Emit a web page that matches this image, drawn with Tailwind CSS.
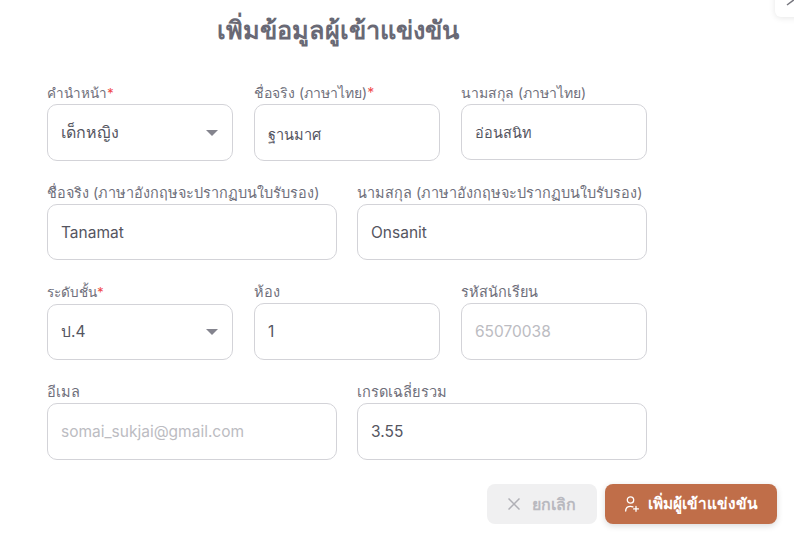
<!DOCTYPE html>
<html lang="th">
<head>
    <meta charset="UTF-8">
    <meta name="viewport" content="width=device-width, initial-scale=1.0">
    <title>เพิ่มข้อมูลผู้เข้าแข่งขัน</title>
    <script src="https://cdn.jsdelivr.net/npm/@tailwindcss/browser@4"></script>
</head>
<body class="bg-white font-['Inter','Noto_Sans','Noto_Sans_CJK_SC',sans-serif] h-[537px] overflow-hidden relative">

    <!-- Corner toggle, cut off by the window edge -->
    <div class="absolute left-[775px] top-[-20px] w-[40px] h-[37px] bg-white rounded-md shadow-[0_1px_6px_rgba(0,0,0,0.10)]">
        <svg class="absolute left-[10px] top-[12px] w-[14px] h-[14px] text-[#77777f]" viewBox="0 0 14 14" fill="none" stroke="currentColor" stroke-width="1.5"><path d="M2 1 10 7 2 13"/></svg>
    </div>

    <h1 class="pl-[217px] pt-[13px] h-[77px] text-[25.3px] leading-[34px] font-semibold text-[#696975]">เพิ่มข้อมูลผู้เข้าแข่งขัน</h1>

    <form class="w-[600px] ml-[47px] flex flex-col">
        <!-- Name (Thai) -->
        <div class="grid grid-cols-[186px_186px_186px] gap-x-[21px] h-[100px]">
            <div>
                <label class="block h-[27px] text-[13.5px] leading-[32px] text-[#6f6f7b]">คำนำหน้า<span class="text-[#f04b4b]">*</span></label>
                <div class="h-[57px] border border-[#d3d3d8] rounded-[10px] flex items-center justify-between pl-[13px] pr-[14px] text-[16px] text-[#55555f]">
                    <span class="-mt-[1px]">เด็กหญิง</span>
                    <span class="w-0 h-0 border-x-[6px] border-x-transparent border-t-[6px] border-t-[#84848e]"></span>
                </div>
            </div>
            <div>
                <label class="block h-[27px] text-[14px] leading-[32px] text-[#6f6f7b]">ชื่อจริง (ภาษาไทย)<span class="text-[#f04b4b]">*</span></label>
                <input class="w-full h-[57px] border border-[#d3d3d8] rounded-[10px] px-[13px] pt-[4px] text-[14.5px] text-[#55555f]" value="ฐานมาศ">
            </div>
            <div>
                <label class="block h-[27px] text-[14px] leading-[32px] text-[#6f6f7b]">นามสกุล (ภาษาไทย)</label>
                <input class="w-full h-[56px] border border-[#d3d3d8] rounded-[10px] px-[13px] text-[14.5px] text-[#55555f]" value="อ่อนสนิท">
            </div>
        </div>

        <!-- Name (English) -->
        <div class="grid grid-cols-[290px_290px] gap-x-[20px] h-[99px]">
            <div>
                <label class="block h-[27px] text-[14.45px] leading-[32px] text-[#6f6f7b]">ชื่อจริง (ภาษาอังกฤษจะปรากฏบนใบรับรอง)</label>
                <input class="w-full h-[56px] border border-[#d3d3d8] rounded-[10px] px-[13px] text-[15.5px] text-[#55555f]" value="Tanamat">
            </div>
            <div>
                <label class="block h-[27px] text-[14.45px] leading-[32px] text-[#6f6f7b]">นามสกุล (ภาษาอังกฤษจะปรากฏบนใบรับรอง)</label>
                <input class="w-full h-[56px] border border-[#d3d3d8] rounded-[10px] px-[13px] text-[15.5px] text-[#55555f]" value="Onsanit">
            </div>
        </div>

        <!-- Class -->
        <div class="grid grid-cols-[186px_186px_186px] gap-x-[21px] h-[100px]">
            <div>
                <label class="block h-[27px] text-[13.5px] leading-[32px] text-[#6f6f7b]">ระดับชั้น<span class="text-[#f04b4b]">*</span></label>
                <div class="mt-px h-[56px] border border-[#d3d3d8] rounded-[10px] flex items-center justify-between pl-[13px] pr-[14px] text-[15.5px] text-[#55555f]">
                    <span>ป.4</span>
                    <span class="w-0 h-0 border-x-[6px] border-x-transparent border-t-[6px] border-t-[#84848e]"></span>
                </div>
            </div>
            <div>
                <label class="block h-[27px] text-[14.5px] leading-[32px] text-[#6f6f7b]">ห้อง</label>
                <input class="w-full h-[57px] border border-[#d3d3d8] rounded-[10px] px-[13px] text-[15.5px] text-[#55555f]" value="1">
            </div>
            <div>
                <label class="block h-[27px] text-[14.5px] leading-[32px] text-[#6f6f7b]">รหัสนักเรียน</label>
                <input class="w-full h-[57px] border border-[#d3d3d8] rounded-[10px] px-[13px] text-[15.5px] placeholder:text-[#bcbcc2]" placeholder="65070038">
            </div>
        </div>

        <!-- Contact -->
        <div class="grid grid-cols-[290px_290px] gap-x-[20px]">
            <div>
                <label class="block h-[27px] text-[14.5px] leading-[32px] text-[#6f6f7b]">อีเมล</label>
                <input class="w-full h-[57px] border border-[#d3d3d8] rounded-[10px] px-[13px] text-[15.5px] placeholder:text-[#bcbcc2]" placeholder="somai_sukjai@gmail.com">
            </div>
            <div>
                <label class="block h-[27px] text-[14.6px] leading-[32px] text-[#6f6f7b]">เกรดเฉลี่ยรวม</label>
                <input class="w-full h-[57px] border border-[#d3d3d8] rounded-[10px] px-[13px] text-[15.5px] text-[#55555f]" value="3.55">
            </div>
        </div>
    </form>

    <!-- Actions -->
    <div class="flex gap-[8px] pl-[487px] mt-[24px]">
        <button class="w-[110px] h-[40px] rounded-lg bg-[#f0f0f1] flex items-center justify-center gap-[12px] text-[16px] font-semibold text-[#b9b9bf]">
            <svg class="w-[12px] h-[12px]" viewBox="0 0 12 12" fill="none" stroke="#b0b0b6" stroke-width="1.5"><path d="M0.5 0.5 11.5 11.5M11.5 0.5 0.5 11.5"/></svg>
            ยกเลิก
        </button>
        <button class="w-[172px] h-[40px] rounded-lg bg-[#c06e49] flex items-center justify-center gap-[9px] text-[15.4px] font-semibold text-white shadow-[0_2px_6px_rgba(0,0,0,0.15)]">
            <svg class="w-[14px] h-[16px]" viewBox="0 0 14 16" fill="none" stroke="white" stroke-width="1.3" stroke-linecap="round"><circle cx="5.5" cy="4" r="3.2"/><path d="M0.7 15c0-3 2-4.6 4.8-4.6 .9 0 1.7.2 2.4.5M11 10.5v4.8M8.6 12.9h4.8"/></svg>
            เพิ่มผู้เข้าแข่งขัน
        </button>
    </div>
</body>
</html>
